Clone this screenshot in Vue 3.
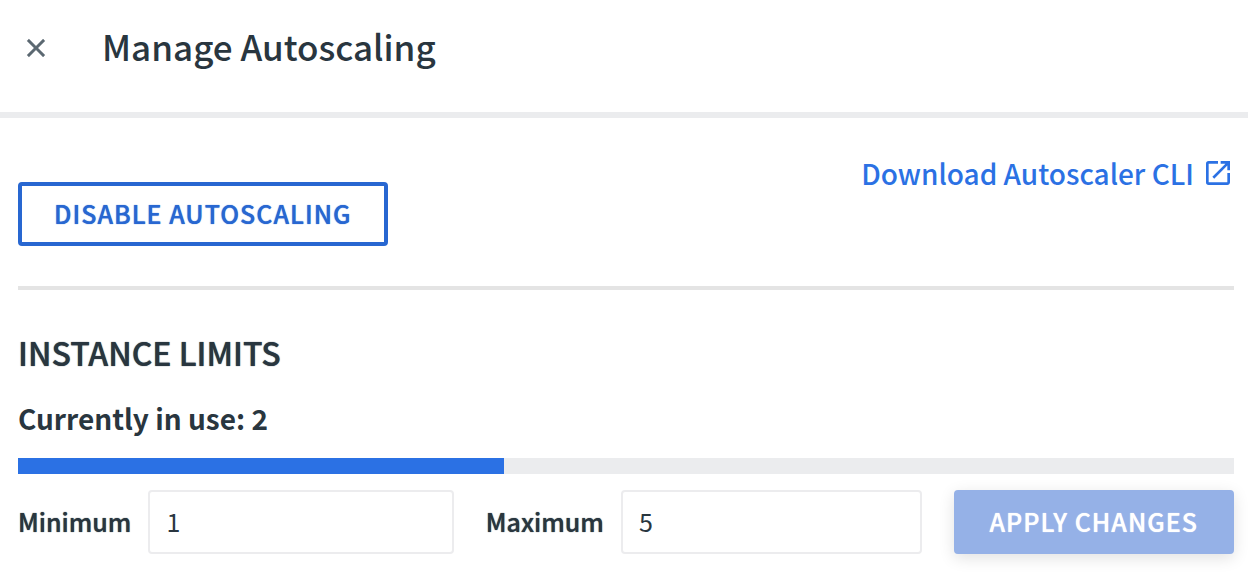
<script setup>
import { computed, ref } from 'vue'

const inUse = 2
const minimum = ref('1')
const maximum = ref('5')
const usage = computed(() => `${Math.min(100, (inUse / (Number(maximum.value) || 1)) * 100)}%`)
</script>

<template>
  <div class="panel">
    <header class="header">
      <button class="close" type="button" aria-label="Close">
        <svg viewBox="0 0 24 24" aria-hidden="true">
          <path d="M18.7 6.7 17.3 5.3 12 10.6 6.7 5.3 5.3 6.7 10.6 12 5.3 17.3 6.7 18.7 12 13.4 17.3 18.7 18.7 17.3 13.4 12z" />
        </svg>
      </button>
      <h1 class="title">Manage Autoscaling</h1>
    </header>

    <main class="body">
      <div class="toolbar">
        <button class="btn btn-outline" type="button">DISABLE AUTOSCALING</button>
        <a class="link" href="#">
          <span>Download Autoscaler CLI</span>
          <svg viewBox="0 0 24 24" aria-hidden="true">
            <path d="M19 19H5V5h7V3H5a2 2 0 0 0-2 2v14a2 2 0 0 0 2 2h14c1.1 0 2-.9 2-2v-7h-2v7zM14 3v2h3.59l-9.83 9.83 1.41 1.41L19 6.41V10h2V3h-7z" />
          </svg>
        </a>
      </div>

      <section class="limits">
        <h2 class="heading">INSTANCE LIMITS</h2>
        <p class="usage">Currently in use: {{ inUse }}</p>
        <div class="track" role="progressbar" aria-label="Instances in use" :aria-valuenow="inUse" aria-valuemin="0" :aria-valuemax="maximum">
          <div class="fill" :style="{ width: usage }"></div>
        </div>
        <form class="form" @submit.prevent>
          <div class="field">
            <label for="minimum">Minimum</label>
            <input id="minimum" v-model="minimum" type="text" inputmode="numeric" />
          </div>
          <div class="field">
            <label for="maximum">Maximum</label>
            <input id="maximum" v-model="maximum" type="text" inputmode="numeric" />
          </div>
          <button class="btn btn-primary" type="submit" disabled>APPLY CHANGES</button>
        </form>
      </section>
    </main>
  </div>
</template>

<style>
body {
  background: #fff;
}
</style>

<style scoped>
.panel {
  font-family: "Noto Sans CJK SC", "Noto Sans", sans-serif;
  font-size: 25px;
  color: #29363f;
}

.panel *,
.panel *::before {
  box-sizing: border-box;
}

.header {
  display: flex;
  align-items: center;
  gap: 50px;
  padding: 16px 20px 32px;
  border-bottom: 6px solid #ebecee;
}

.close {
  display: flex;
  padding: 0;
  border: 0;
  background: none;
  fill: #5b6871;
  stroke: #5b6871;
  stroke-width: 0.3;
}

.close svg,
.link svg {
  width: 32px;
  height: 32px;
}

.title {
  margin: 0;
  padding-bottom: 4px;
  font-size: 35px;
  font-weight: 500;
  line-height: 60px;
}

.body {
  padding: 32px 14px 32px 18px;
}

.toolbar {
  display: flex;
  justify-content: space-between;
  align-items: flex-start;
  padding-bottom: 40px;
  border-bottom: 4px solid #e4e4e4;
}

.btn {
  height: 64px;
  padding: 0 32px 2px;
  border: 4px solid transparent;
  border-radius: 4px;
  font-family: inherit;
  font-size: 25px;
  font-weight: 500;
  line-height: 32px;
  letter-spacing: 1px;
}

.btn,
.heading,
.field label {
  text-shadow: 0 0 1px currentColor;
}

.btn-outline {
  margin-top: 32px;
  border-color: #2867d1;
  background: #fff;
  color: #2867d1;
}

.btn-primary {
  border-color: #95b1e7;
  background: #95b1e7;
  color: #fff;
  box-shadow: 0 4px 16px rgba(0, 0, 0, 0.12);
}

.link {
  display: flex;
  align-items: center;
  gap: 8px;
  font-size: 28px;
  font-weight: 500;
  line-height: 46px;
  color: #2b71e4;
  fill: currentColor;
  text-decoration: none;
}

.limits {
  padding-top: 38px;
}

.heading {
  margin: 0;
  font-size: 32px;
  font-weight: 500;
  line-height: 48px;
}

.usage {
  margin: 18px 0 16px;
  font-size: 28px;
  font-weight: 700;
  line-height: 48px;
}

.track {
  height: 16px;
  background: #ebecee;
}

.fill {
  height: 100%;
  background: #2b71e4;
}

.form {
  display: flex;
  gap: 32px;
  margin-top: 16px;
}

.field {
  display: flex;
  flex: 1;
  align-items: center;
  gap: 17px;
  min-width: 0;
}

.field label {
  padding-bottom: 2px;
  font-weight: 500;
  line-height: 32px;
}

.field input {
  flex: 1;
  min-width: 0;
  height: 64px;
  padding: 0 16px 2px;
  border: 2px solid #ececee;
  border-radius: 4px;
  background: #fff;
  color: inherit;
  font-family: inherit;
  font-size: 25px;
  line-height: 32px;
}
</style>
